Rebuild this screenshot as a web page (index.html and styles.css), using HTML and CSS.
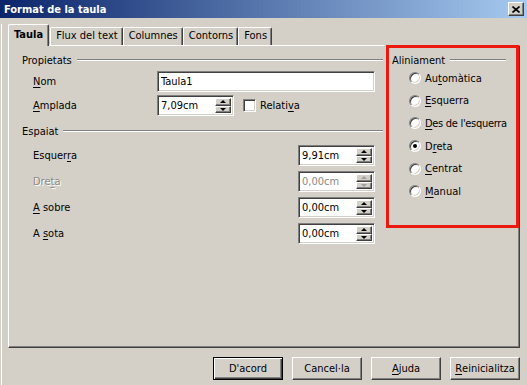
FILE: index.html
```html
<!DOCTYPE html>
<html lang="ca">
<head>
    <meta charset="UTF-8">
    <meta name="viewport" content="width=device-width, initial-scale=1.0">
    <title>Format de la taula</title>
    <link rel="stylesheet" href="styles.css">
</head>
<body>

<div class="titlebar">
    <span class="title">Format de la taula</span>
    <div class="close">
        <svg width="8" height="7" viewBox="0 0 8 7">
            <path d="M0.5 0.5 L7.5 6.5 M7.5 0.5 L0.5 6.5" stroke="#000" stroke-width="1.6" fill="none"/>
        </svg>
    </div>
</div>

<div class="client">
    <div class="tabs">
        <div class="tab active">Taula</div>
        <div class="tab">Flux del text</div>
        <div class="tab">Columnes</div>
        <div class="tab">Contorns</div>
        <div class="tab">Fons</div>
    </div>

    <div class="panel">
        <div class="left">
            <div class="group-head"><span>Propietats</span><span class="rule"></span></div>
            <div class="row">
                <label class="prop-label"><u>N</u>om</label>
                <div class="field name-field">Taula1</div>
            </div>
            <div class="row row-gap">
                <label class="prop-label"><u>A</u>mplada</label>
                <div class="spin">
                    <div class="spin-text">7,09cm</div>
                    <div class="spin-btns"><span class="up"></span><span class="down"></span></div>
                </div>
                <span class="check"></span>
                <label>Relati<u>v</u>a</label>
            </div>

            <div class="group-head group-two"><span>Espaiat</span><span class="rule"></span></div>
            <div class="row space-first">
                <label class="space-label">Esquer<u>r</u>a</label>
                <div class="spin">
                    <div class="spin-text">9,91cm</div>
                    <div class="spin-btns"><span class="up"></span><span class="down"></span></div>
                </div>
            </div>
            <div class="row space-row disabled">
                <label class="space-label">Dre<u>t</u>a</label>
                <div class="spin">
                    <div class="spin-text">0,00cm</div>
                    <div class="spin-btns"><span class="up"></span><span class="down"></span></div>
                </div>
            </div>
            <div class="row space-row">
                <label class="space-label"><u>A</u> sobre</label>
                <div class="spin">
                    <div class="spin-text">0,00cm</div>
                    <div class="spin-btns"><span class="up"></span><span class="down"></span></div>
                </div>
            </div>
            <div class="row space-row">
                <label class="space-label">A <u>s</u>ota</label>
                <div class="spin">
                    <div class="spin-text">0,00cm</div>
                    <div class="spin-btns"><span class="up"></span><span class="down"></span></div>
                </div>
            </div>
        </div>

        <div class="align-box">
            <div class="group-head"><span>Aliniament</span><span class="rule"></span></div>
            <div class="radio-row"><span class="radio"></span><label>Au<u>t</u>omàtica</label></div>
            <div class="radio-row"><span class="radio"></span><label><u>E</u>squerra</label></div>
            <div class="radio-row"><span class="radio"></span><label class="long"><u>D</u>es de l'esquerra</label></div>
            <div class="radio-row"><span class="radio checked"></span><label>D<u>r</u>eta</label></div>
            <div class="radio-row"><span class="radio"></span><label><u>C</u>entrat</label></div>
            <div class="radio-row"><span class="radio"></span><label><u>M</u>anual</label></div>
        </div>
    </div>

    <div class="buttons">
        <div class="btn default">D'acord</div>
        <div class="btn">Cancel·la</div>
        <div class="btn"><u>A</u>juda</div>
        <div class="btn"><u>R</u>einicialitza</div>
    </div>
</div>

</body>
</html>
```

FILE: styles.css
```css
body {
    margin: 0;
    padding: 0;
    width: 527px;
    height: 385px;
    overflow: hidden;
    background: #d4d0c8;
    font-family: "DejaVu Sans Condensed", "DejaVu Sans", sans-serif;
    font-stretch: condensed;
    font-size: 11px;
    color: #000;
}
u {
    text-decoration-thickness: 1px;
    text-underline-offset: 2px;
}

/* title bar */
.titlebar {
    height: 18px;
    display: flex;
    align-items: center;
    justify-content: space-between;
    background: linear-gradient(to right, #0a246a, #a6caf0);
    padding: 0 3px 0 4px;
}
.title {
    color: #fff;
    font-weight: bold;
}
.close {
    width: 14px;
    height: 12px;
    display: flex;
    align-items: center;
    justify-content: center;
    background: #d4d0c8;
    border: 1px solid;
    border-color: #fff #404040 #404040 #fff;
    box-shadow: inset -1px -1px #808080;
}

/* dialog body */
.client {
    margin-left: 1px;
    border-left: 1px solid #fff;
    height: 367px;
}
.tabs {
    display: flex;
    align-items: flex-end;
    margin: 6px 0 0 6px;
    height: 21px;
}
.tab {
    height: 17px;
    line-height: 16px;
    padding: 0 4px 0 5px;
    border-top: 1px solid #fff;
    border-left: 1px solid #fff;
    border-right: 1px solid #404040;
    box-shadow: inset -1px 0 #808080;
    border-radius: 2px 2px 0 0;
}
.tab.active {
    height: 21px;
    line-height: 20px;
    padding: 0 5px 0 5px;
    margin-right: 1px;
    margin-bottom: -1px;
    font-weight: bold;
    background: #d4d0c8;
    position: relative;
    z-index: 1;
}

.panel {
    display: flex;
    margin-left: 6px;
    width: 512px;
    height: 303px;
    box-sizing: border-box;
    border: 1px solid;
    border-color: #fff #404040 #404040 #fff;
    box-shadow: inset -1px -1px #808080;
}

.group-head {
    display: flex;
    align-items: center;
    height: 14px;
}
.rule {
    flex: 1;
    margin-left: 5px;
    border-top: 1px solid #808080;
    border-bottom: 1px solid #fff;
}

.left {
    width: 377px;
    box-sizing: border-box;
    padding: 7px 3px 0 13px;
}
.row {
    display: flex;
    align-items: center;
    height: 21px;
    padding-left: 11px;
    margin-top: 4px;
}
.row-gap {
    margin-top: 3px;
}
.group-two {
    margin-top: 8px;
}
.space-first {
    margin-top: 7px;
}
.space-row {
    margin-top: 5px;
}
.prop-label {
    width: 124px;
}
.space-label {
    width: 265px;
}

.field, .spin {
    height: 21px;
    box-sizing: border-box;
    background: #fff;
    border: 1px solid;
    border-color: #808080 #fff #fff #808080;
    box-shadow: inset 1px 1px #404040, inset -1px -1px #d4d0c8;
}
.field {
    padding: 0 3px;
    line-height: 19px;
}
.name-field {
    width: 218px;
}
.spin {
    width: 77px;
    display: flex;
    padding: 2px;
}
.spin-text {
    flex: 1;
    line-height: 15px;
    padding-left: 1px;
}
.spin-btns {
    width: 16px;
    display: flex;
    flex-direction: column;
}
.spin-btns span {
    flex: 1;
    display: flex;
    align-items: center;
    justify-content: center;
    background: #d4d0c8;
    border: 1px solid;
    border-color: #fff #404040 #404040 #fff;
    box-shadow: inset -1px -1px #808080;
}
.spin-btns .up::after {
    content: "";
    border-left: 3px solid transparent;
    border-right: 3px solid transparent;
    border-bottom: 3px solid #000;
}
.spin-btns .down::after {
    content: "";
    border-left: 3px solid transparent;
    border-right: 3px solid transparent;
    border-top: 3px solid #000;
}

.disabled label,
.disabled .spin-text {
    color: #8c8a84;
}
.disabled label {
    text-shadow: 1px 1px #fff;
}
.disabled .up::after {
    border-bottom-color: #a0a0a0;
}
.disabled .down::after {
    border-top-color: #a0a0a0;
}

.check {
    width: 13px;
    height: 13px;
    box-sizing: border-box;
    margin: 0 4px 0 9px;
    background: #fff;
    border: 1px solid;
    border-color: #808080 #fff #fff #808080;
    box-shadow: inset 1px 1px #404040, inset -1px -1px #d4d0c8;
}

/* alignment group, outlined in red */
.align-box {
    width: 133px;
    height: 183px;
    box-sizing: border-box;
    margin-top: -1px;
    border: 3px solid #ec1a0e;
    padding: 5px 10px 0 3px;
}
.radio-row {
    display: flex;
    align-items: center;
    height: 22.6px;
    padding-left: 17px;
    white-space: nowrap;
}
.radio-row .long {
    letter-spacing: -0.3px;
}
.radio {
    width: 12px;
    height: 12px;
    box-sizing: border-box;
    flex: none;
    margin-right: 4px;
    border-radius: 50%;
    background: #fff;
    border: 1px solid;
    border-color: #808080 #fff #fff #808080;
    box-shadow: inset 1px 1px #404040, inset -1px -1px #d4d0c8;
    display: flex;
    align-items: center;
    justify-content: center;
}
.radio.checked::after {
    content: "";
    width: 4px;
    height: 4px;
    border-radius: 50%;
    background: #000;
}

/* bottom buttons */
.buttons {
    display: flex;
    justify-content: flex-end;
    gap: 9px;
    margin: 9px 0 0 0;
    width: 518px;
}
.btn {
    width: 70px;
    height: 23px;
    box-sizing: border-box;
    display: flex;
    align-items: center;
    justify-content: center;
    border: 1px solid;
    border-color: #fff #404040 #404040 #fff;
    box-shadow: inset -1px -1px #808080;
}
.btn.default {
    border-color: #000;
    box-shadow: inset 1px 1px #fff, inset -1px -1px #404040, inset -2px -2px #808080;
}
```
